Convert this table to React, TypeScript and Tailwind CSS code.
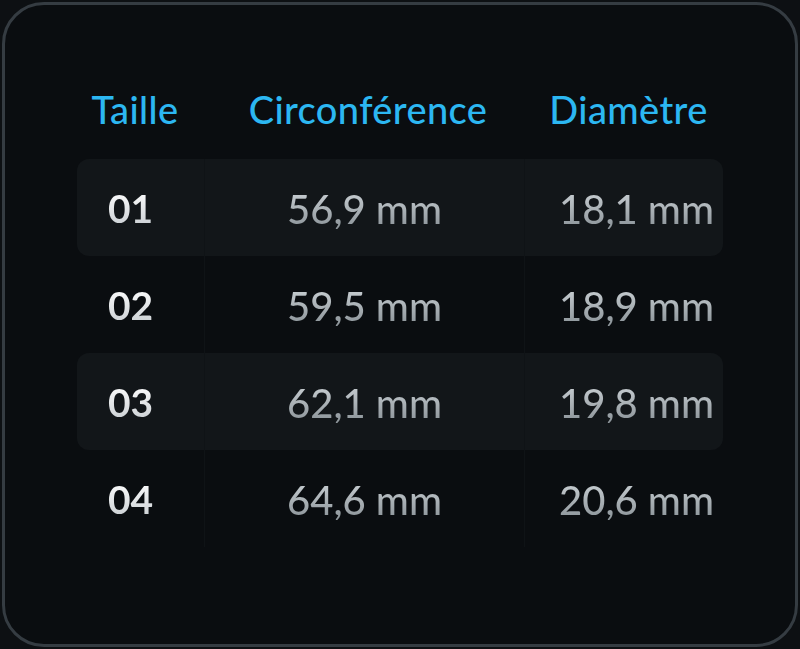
import React from "react";

const rows = [
  { size: "01", circ: "56,9 mm", diam: "18,1 mm", striped: true },
  { size: "02", circ: "59,5 mm", diam: "18,9 mm", striped: false },
  { size: "03", circ: "62,1 mm", diam: "19,8 mm", striped: true },
  { size: "04", circ: "64,6 mm", diam: "20,6 mm", striped: false },
];

export default function App() {
  return (
    <div
      className="w-[800px] h-[649px] bg-[#0d1013] p-[2px]"
      style={{ fontFamily: "Lato, 'Noto Sans', sans-serif" }}
    >
      <div className="h-full rounded-[42px] border-[3px] border-[#353c42] bg-[#0a0d10] px-[72px] pt-[53px]">
        <div className="grid grid-cols-[128px_320px_199px] h-[101px] items-center text-[38px] tracking-[0.01em] font-medium text-[#2cb7f2] leading-none">
          <div className="text-center pr-[12px]">Taille</div>
          <div className="text-center pl-[6px]">Circonférence</div>
          <div className="text-center pl-[8px]">Diamètre</div>
        </div>
        <div className="flex flex-col">
          {rows.map((r) => (
            <div
              key={r.size}
              className={`grid grid-cols-[128px_320px_199px] h-[97px] rounded-[12px] ${
                r.striped ? "bg-[#121619]" : ""
              }`}
            >
              <div className="flex items-center justify-center pr-[20px] pt-[2px] border-r border-[#0f1316]">
                <span className="text-[39px] font-bold leading-none bg-gradient-to-b from-[#ffffff] to-[#c9ced2] bg-clip-text text-transparent">
                  {r.size}
                </span>
              </div>
              <div className="flex items-center justify-center pt-[2px] border-r border-[#0f1316]">
                <span className="text-[40px] font-medium leading-none bg-gradient-to-b from-[#ccd2d6] to-[#8b9398] bg-clip-text text-transparent">
                  {r.circ}
                </span>
              </div>
              <div className="flex items-center justify-center pl-[24px] pt-[2px]">
                <span className="text-[40px] font-medium leading-none bg-gradient-to-b from-[#ccd2d6] to-[#8b9398] bg-clip-text text-transparent">
                  {r.diam}
                </span>
              </div>
            </div>
          ))}
        </div>
      </div>
    </div>
  );
}
